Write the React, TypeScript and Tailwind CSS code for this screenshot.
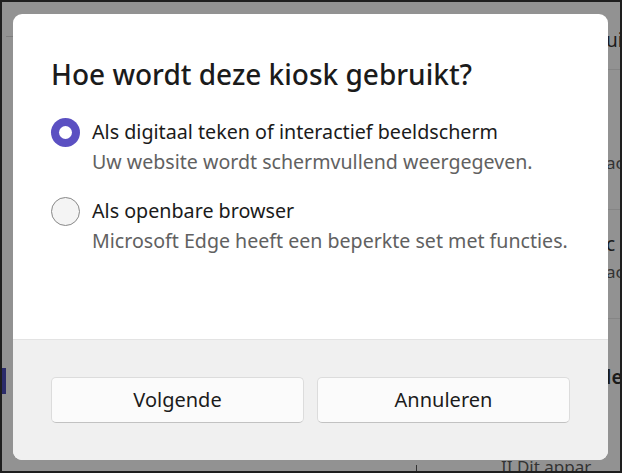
// Kiosk setup dialog over a dimmed settings window.

const FONT = "font-['Noto_Sans',sans-serif]";

interface OptionProps {
  title: string;
  description: string;
  selected: boolean;
}

function RadioOption({ title, description, selected }: OptionProps) {
  return (
    <div className="flex items-start gap-[12px]">
      {selected ? (
        <span className="mt-[1px] flex h-[29px] w-[29px] shrink-0 items-center justify-center rounded-full bg-[#5b50c2]">
          <span className="h-[13px] w-[13px] rounded-full bg-white" />
        </span>
      ) : (
        <span className="mt-[1px] h-[29px] w-[29px] shrink-0 rounded-full border border-[#888] bg-[#f4f4f4]" />
      )}
      <div className="flex flex-col">
        <span className="text-[19.7px] leading-[30px] text-[#1b1b1b]">{title}</span>
        <span className="text-[19.6px] leading-[29px] text-[#616161]">{description}</span>
      </div>
    </div>
  );
}

function FooterButton({ label }: { label: string }) {
  return (
    <button className="h-[46px] flex-1 rounded-[5px] border border-[#dcdcdc] border-b-[#c2c2c2] bg-[#fbfbfb] text-[20px] text-[#1b1b1b]">
      {label}
    </button>
  );
}

export default function App() {
  return (
    <div className={`relative h-[473px] w-[622px] overflow-hidden border-2 border-[#1e1e1e] bg-[#929292] ${FONT}`}>
      {/* dimmed settings window behind the dialog */}
      <div className="absolute inset-0 flex">
        <div className="flex w-[4px] flex-col pt-[366px]">
          <div className="h-[26px] bg-[#2b2b6a]" />
        </div>
        <div className="flex flex-1 flex-col">
          <div className="mt-[34px] h-px w-[156px] bg-[#7d7d7d]" />
        </div>
        <div className="flex w-[14px] flex-col overflow-hidden whitespace-nowrap pt-[24px] text-[#1b1b1b]">
          <span className="text-[19px]">ui</span>
          <div className="mt-[14px] h-px bg-[#858585]" />
          <span className="mt-[80px] text-[17px] text-[#333]">ac</span>
          <div className="mt-[34px] h-px bg-[#858585]" />
          <span className="mt-[20px] text-[19px]">c</span>
          <span className="text-[17px] text-[#333]">ac</span>
          <div className="mt-[34px] h-px bg-[#858585]" />
          <span className="mt-[44px] text-[19px] font-semibold">le</span>
        </div>
      </div>
      <div className="absolute bottom-[-8px] left-[414px] flex items-end gap-[84px] whitespace-nowrap text-[17px] text-[#333]">
        <div className="h-[14px] w-px bg-[#333]" />
        <span>II Dit appar</span>
      </div>

      {/* dialog */}
      <div className="absolute left-[11px] top-[12px] flex h-[446px] w-[595px] flex-col overflow-hidden rounded-[9px] bg-white">
        <div className="flex flex-1 flex-col px-[38px] pt-[40px]">
          <h1 className="text-[28px] font-medium leading-[40px] text-[#1b1b1b]">
            Hoe wordt deze kiosk gebruikt?
          </h1>
          <div className="mt-[23px] flex flex-col gap-[20px]">
            <RadioOption
              selected
              title="Als digitaal teken of interactief beeldscherm"
              description="Uw website wordt schermvullend weergegeven."
            />
            <RadioOption
              selected={false}
              title="Als openbare browser"
              description="Microsoft Edge heeft een beperkte set met functies."
            />
          </div>
        </div>
        <div className="flex h-[121px] items-center gap-[13px] border-t border-[#e3e3e3] bg-[#f0f0f0] px-[38px]">
          <FooterButton label="Volgende" />
          <FooterButton label="Annuleren" />
        </div>
      </div>
    </div>
  );
}
